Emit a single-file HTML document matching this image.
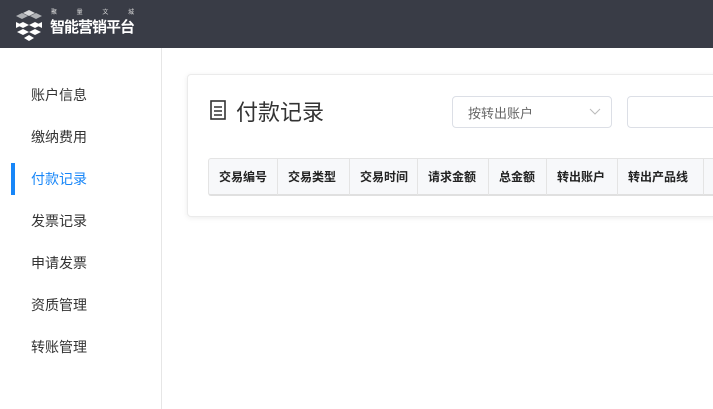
<!DOCTYPE html>
<html><head><meta charset="utf-8"><style>
*{margin:0;padding:0;box-sizing:border-box}
body{width:713px;height:409px;overflow:hidden;background:#fff;font-family:"Liberation Sans","Noto Sans CJK SC",sans-serif;position:relative}
.hd{position:absolute;left:0;top:0;width:713px;height:48px;background:#393c46}
.side{position:absolute;left:0;top:48px;width:162px;height:361px;border-right:1px solid #e6e6e6}
.mi{position:absolute;left:31px;font-size:14px;color:#333}
.card{position:absolute;left:187px;top:74px;width:560px;height:143px;border:1px solid #ebebeb;border-radius:4px;box-shadow:0 1px 6px rgba(0,0,0,.08);background:#fff}
.th{position:absolute;top:158px;height:38px;left:208px;width:520px;border:1px solid #e4e4e4;border-bottom:2px solid #e0e0e0;background:#f7f8fa;border-radius:3px 0 0 3px}
.c{position:absolute;top:0;height:36px;line-height:36px;font-size:12px;font-weight:bold;color:#222;border-right:1px solid #e4e4e4;padding-left:10px}
</style></head><body>
<div class="hd">
<svg style="position:absolute;left:12px;top:8px" width="34" height="36" viewBox="0 0 34 36">
<g fill="#fff"><path d="M17 2l6 3-6 3-6-3z" opacity=".8"/><path d="M10 5l6 3-6 3-6-3z" opacity=".6"/><path d="M24 5l6 3-6 3-6-3z" opacity=".6"/>
<path d="M4 14l6 3-6 3z"/><path d="M11 14l6 3-6 3-6-3z"/><path d="M23 14l6 3-6 3-6-3z"/><path d="M30 14v6l-6-3z"/>
<path d="M11 21l6 3-6 3-6-3z"/><path d="M23 21l6 3-6 3-6-3z"/><path d="M17 27l5 3-5 3-5-3z"/></g></svg>
<div style="position:absolute;left:51px;top:7px;font-size:6px;color:#ddd;letter-spacing:9px">聚 量 文 城</div>
<div style="position:absolute;left:50px;top:16px;font-size:15px;color:#fff;font-weight:bold;letter-spacing:-1px">智能营销平台</div>
</div>
<div class="side">
<div class="mi" style="top:37px">账户信息</div>
<div class="mi" style="top:79px">缴纳费用</div>
<div style="position:absolute;left:11px;top:115px;width:4px;height:32px;background:#1786f8"></div>
<div class="mi" style="top:121px;color:#1786f8">付款记录</div>
<div class="mi" style="top:163px">发票记录</div>
<div class="mi" style="top:205px">申请发票</div>
<div class="mi" style="top:247px">资质管理</div>
<div class="mi" style="top:289px">转账管理</div>
</div>
<div class="card"></div>
<svg style="position:absolute;left:210px;top:100px" width="16" height="20" viewBox="0 0 16 20"><g fill="none" stroke="#333" stroke-width="1.6"><rect x="1" y="1" width="14" height="18"/><path d="M4 7h8M4 11h8M4 15h8"/></g></svg>
<div style="position:absolute;left:236px;top:95px;font-size:22px;color:#333">付款记录</div>
<div style="position:absolute;left:452px;top:96px;width:160px;height:32px;border:1px solid #dcdfe6;border-radius:4px"><span style="position:absolute;left:15px;top:6px;font-size:13px;color:#666">按转出账户</span>
<svg style="position:absolute;right:10px;top:11px" width="12" height="8"><path d="M1 1l5 5 5-5" stroke="#bbb" fill="none"/></svg></div>
<div style="position:absolute;left:627px;top:96px;width:100px;height:32px;border:1px solid #dcdfe6;border-radius:4px"></div>
<div class="th">
<div class="c" style="left:0;width:69px">交易编号</div>
<div class="c" style="left:69px;width:72px">交易类型</div>
<div class="c" style="left:141px;width:68px">交易时间</div>
<div class="c" style="left:209px;width:71px">请求金额</div>
<div class="c" style="left:280px;width:58px">总金额</div>
<div class="c" style="left:338px;width:71px">转出账户</div>
<div class="c" style="left:409px;width:86px">转出产品线</div>
</div>
</body></html>
